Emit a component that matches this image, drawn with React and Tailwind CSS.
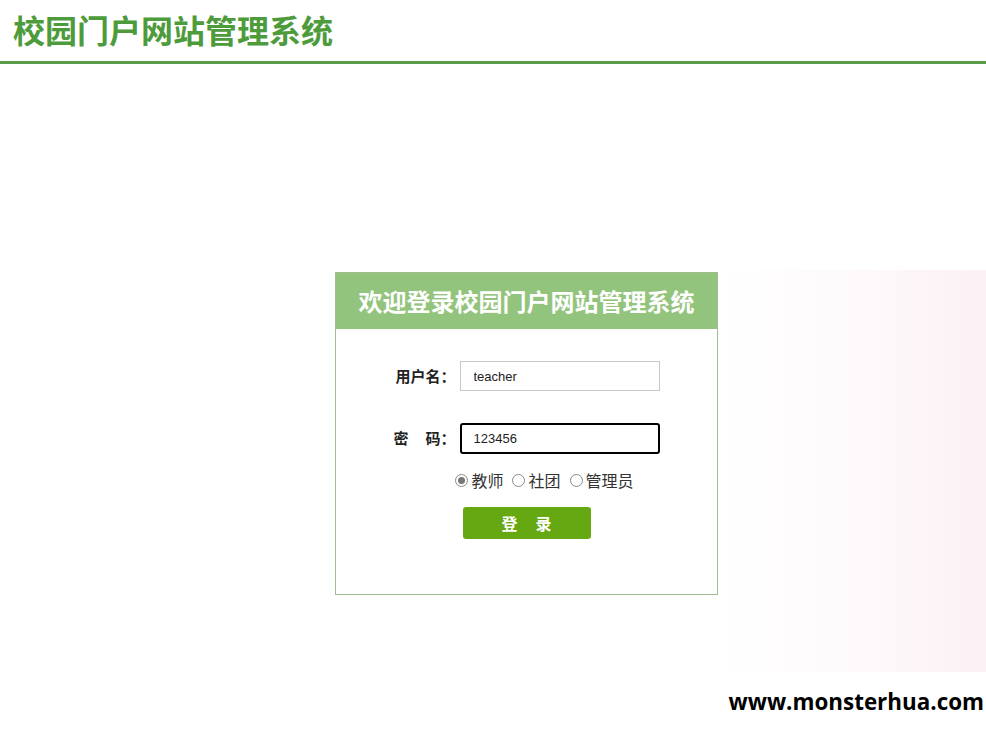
export default function App() {
  return (
    <div className="relative min-h-[731px] w-full overflow-hidden bg-white font-['Noto_Sans_CJK_SC',sans-serif]">
      {/* faint pink backdrop on the right */}
      <div className="pointer-events-none absolute right-0 top-[270px] h-[402px] w-[270px] bg-gradient-to-r from-white via-[#fefafb] to-[#fcf1f5]" />

      {/* header */}
      <header className="relative border-b-[3px] border-[#5a9c48] pl-[13px] pt-[10px] h-[64px]">
        <h1 className="text-[32px] leading-[38px] font-bold text-[#4e9b3c]">校园门户网站管理系统</h1>
      </header>

      {/* login box */}
      <div className="relative ml-[335px] mt-[208px] w-[383px] border border-[#a3bd92] bg-white">
        <div className="flex h-[56px] items-center justify-center bg-[#93c47d]">
          <h2 className="text-[24px] font-bold text-white">欢迎登录校园门户网站管理系统</h2>
        </div>

        <div className="flex flex-col items-center pt-[32px] pb-[55px]">
          <div className="flex items-center gap-[4px]">
            <label className="w-[62px] whitespace-nowrap text-right text-[15px] font-bold text-[#222]">用户名：</label>
            <input
              defaultValue="teacher"
              className="h-[30px] w-[200px] border border-[#c8c8c8] px-[13px] text-[13px] text-[#222] outline-none font-['Liberation_Sans',sans-serif]"
            />
          </div>

          <div className="mt-[32px] flex items-center gap-[4px]">
            <label className="w-[62px] whitespace-nowrap text-right text-[15px] font-bold text-[#222]">
              密<span className="inline-block w-[17px]" />码：
            </label>
            <input
              defaultValue="123456"
              className="h-[31px] w-[200px] rounded-[3px] border-2 border-black px-[12px] text-[13px] text-[#222] outline-none font-['Liberation_Sans',sans-serif]"
            />
          </div>

          <div className="ml-[36px] mt-[14px] flex items-center text-[16px] text-[#333]">
            <Radio checked label="教师" />
            <Radio label="社团" className="ml-[9px]" />
            <Radio label="管理员" className="ml-[9px]" />
          </div>

          <button className="mt-[15px] h-[32px] w-[128px] rounded-[3px] bg-[#66a812] text-[16px] font-bold text-white">
            登<span className="inline-block w-[18px]" />录
          </button>
        </div>
      </div>

      {/* watermark */}
      <div className="absolute bottom-0 right-0 flex h-[59px] w-[261px] items-center justify-end bg-white pr-[2px]">
        <span className="text-[22.4px] font-bold text-black font-['Open_Sans',sans-serif]">www.monsterhua.com</span>
      </div>
    </div>
  );
}

function Radio({ checked, label, className = "" }) {
  return (
    <label className={`flex items-center ${className}`}>
      <span className="mr-[3px] flex h-[13px] w-[13px] items-center justify-center rounded-full border border-[#8a8a8a] bg-white">
        {checked && <span className="h-[7px] w-[7px] rounded-full bg-[#777]" />}
      </span>
      {label}
    </label>
  );
}
